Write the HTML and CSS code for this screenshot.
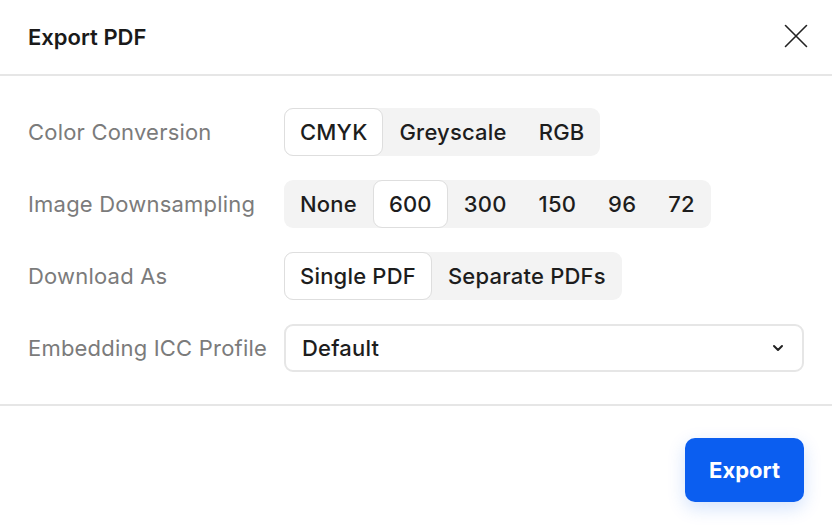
FILE: index.html
```html
<!DOCTYPE html>
<html lang="en">
<head>
  <meta charset="UTF-8">
  <meta name="viewport" content="width=device-width, initial-scale=1.0">
  <title>Export PDF</title>
  <link rel="stylesheet" href="styles.css">
</head>
<body>

  <div class="dialog">
    <header class="head">
      <h3 class="title">Export PDF</h3>
      <button class="close" type="button" aria-label="Close">
        <svg width="24" height="24" viewBox="0 0 24 24">
          <path d="M1.5 1.5 L22.5 22.5 M22.5 1.5 L1.5 22.5" stroke="#222" stroke-width="1.6" fill="none" stroke-linecap="round"/>
        </svg>
      </button>
    </header>

    <div class="content">
      <div class="row">
        <span class="label">Color Conversion</span>
        <div class="segments">
          <button class="seg active">CMYK</button>
          <button class="seg">Greyscale</button>
          <button class="seg">RGB</button>
        </div>
      </div>

      <div class="row">
        <span class="label">Image Downsampling</span>
        <div class="segments">
          <button class="seg">None</button>
          <button class="seg active">600</button>
          <button class="seg">300</button>
          <button class="seg">150</button>
          <button class="seg">96</button>
          <button class="seg">72</button>
        </div>
      </div>

      <div class="row">
        <span class="label">Download As</span>
        <div class="segments">
          <button class="seg active">Single PDF</button>
          <button class="seg">Separate PDFs</button>
        </div>
      </div>

      <div class="row">
        <span class="label">Embedding ICC Profile</span>
        <div class="select">
          <span>Default</span>
          <svg width="12" height="8" viewBox="0 0 12 8">
            <path d="M2 2 L6 6 L10 2" stroke="#222" stroke-width="2" fill="none" stroke-linecap="round" stroke-linejoin="round"/>
          </svg>
        </div>
      </div>
    </div>

    <footer class="foot">
      <button class="export" type="button">Export</button>
    </footer>
  </div>

</body>
</html>
```

FILE: styles.css
```css
body {
  margin: 0;
  background: #fff;
  font-family: Inter, "Noto Sans", sans-serif;
  color: #1d1d1d;
  letter-spacing: 0.2px;
}
button {
  font-family: inherit;
  letter-spacing: inherit;
  cursor: pointer;
}
.dialog {
  width: 832px;
  height: 526px;
  display: flex;
  flex-direction: column;
}
.head {
  height: 74px;
  border-bottom: 2px solid #e6e6e6;
  display: flex;
  align-items: center;
  justify-content: space-between;
  padding: 0 24px 0 28px;
}
.title {
  margin: 0;
  font-size: 22px;
  font-weight: 600;
  letter-spacing: 0;
  color: #1a1a1a;
}
.close {
  border: none;
  background: none;
  padding: 0;
  width: 24px;
  height: 24px;
  margin-top: -2px;
}
.content {
  padding: 32px 28px;
  display: flex;
  flex-direction: column;
  gap: 24px;
}
.row {
  display: flex;
  align-items: center;
  height: 48px;
}
.label {
  width: 256px;
  flex: none;
  font-size: 22px;
  color: #7b7b7b;
}
.segments {
  display: flex;
  background: #f3f3f3;
  border-radius: 9px;
  height: 48px;
}
.seg {
  border: 1px solid transparent;
  background: none;
  border-radius: 9px;
  padding: 0 15px;
  font-size: 22px;
  font-weight: 500;
  color: #1d1d1d;
  height: 48px;
}
.seg.active {
  background: #fff;
  border-color: #dedede;
}
.select {
  flex: 1;
  height: 48px;
  box-sizing: border-box;
  border: 2px solid #e6e6e6;
  border-radius: 9px;
  display: flex;
  align-items: center;
  justify-content: space-between;
  padding: 0 18px 0 16px;
  font-size: 22px;
  font-weight: 500;
}
.foot {
  border-top: 2px solid #e6e6e6;
  padding: 32px 28px 24px;
  display: flex;
  justify-content: flex-end;
}
.export {
  height: 64px;
  padding: 0 24px;
  border: none;
  border-radius: 10px;
  background: #0b5ef0;
  color: #fff;
  font-size: 22px;
  font-weight: 700;
  letter-spacing: 0;
  box-shadow: 0 6px 18px rgba(11, 94, 240, 0.18);
}
```
